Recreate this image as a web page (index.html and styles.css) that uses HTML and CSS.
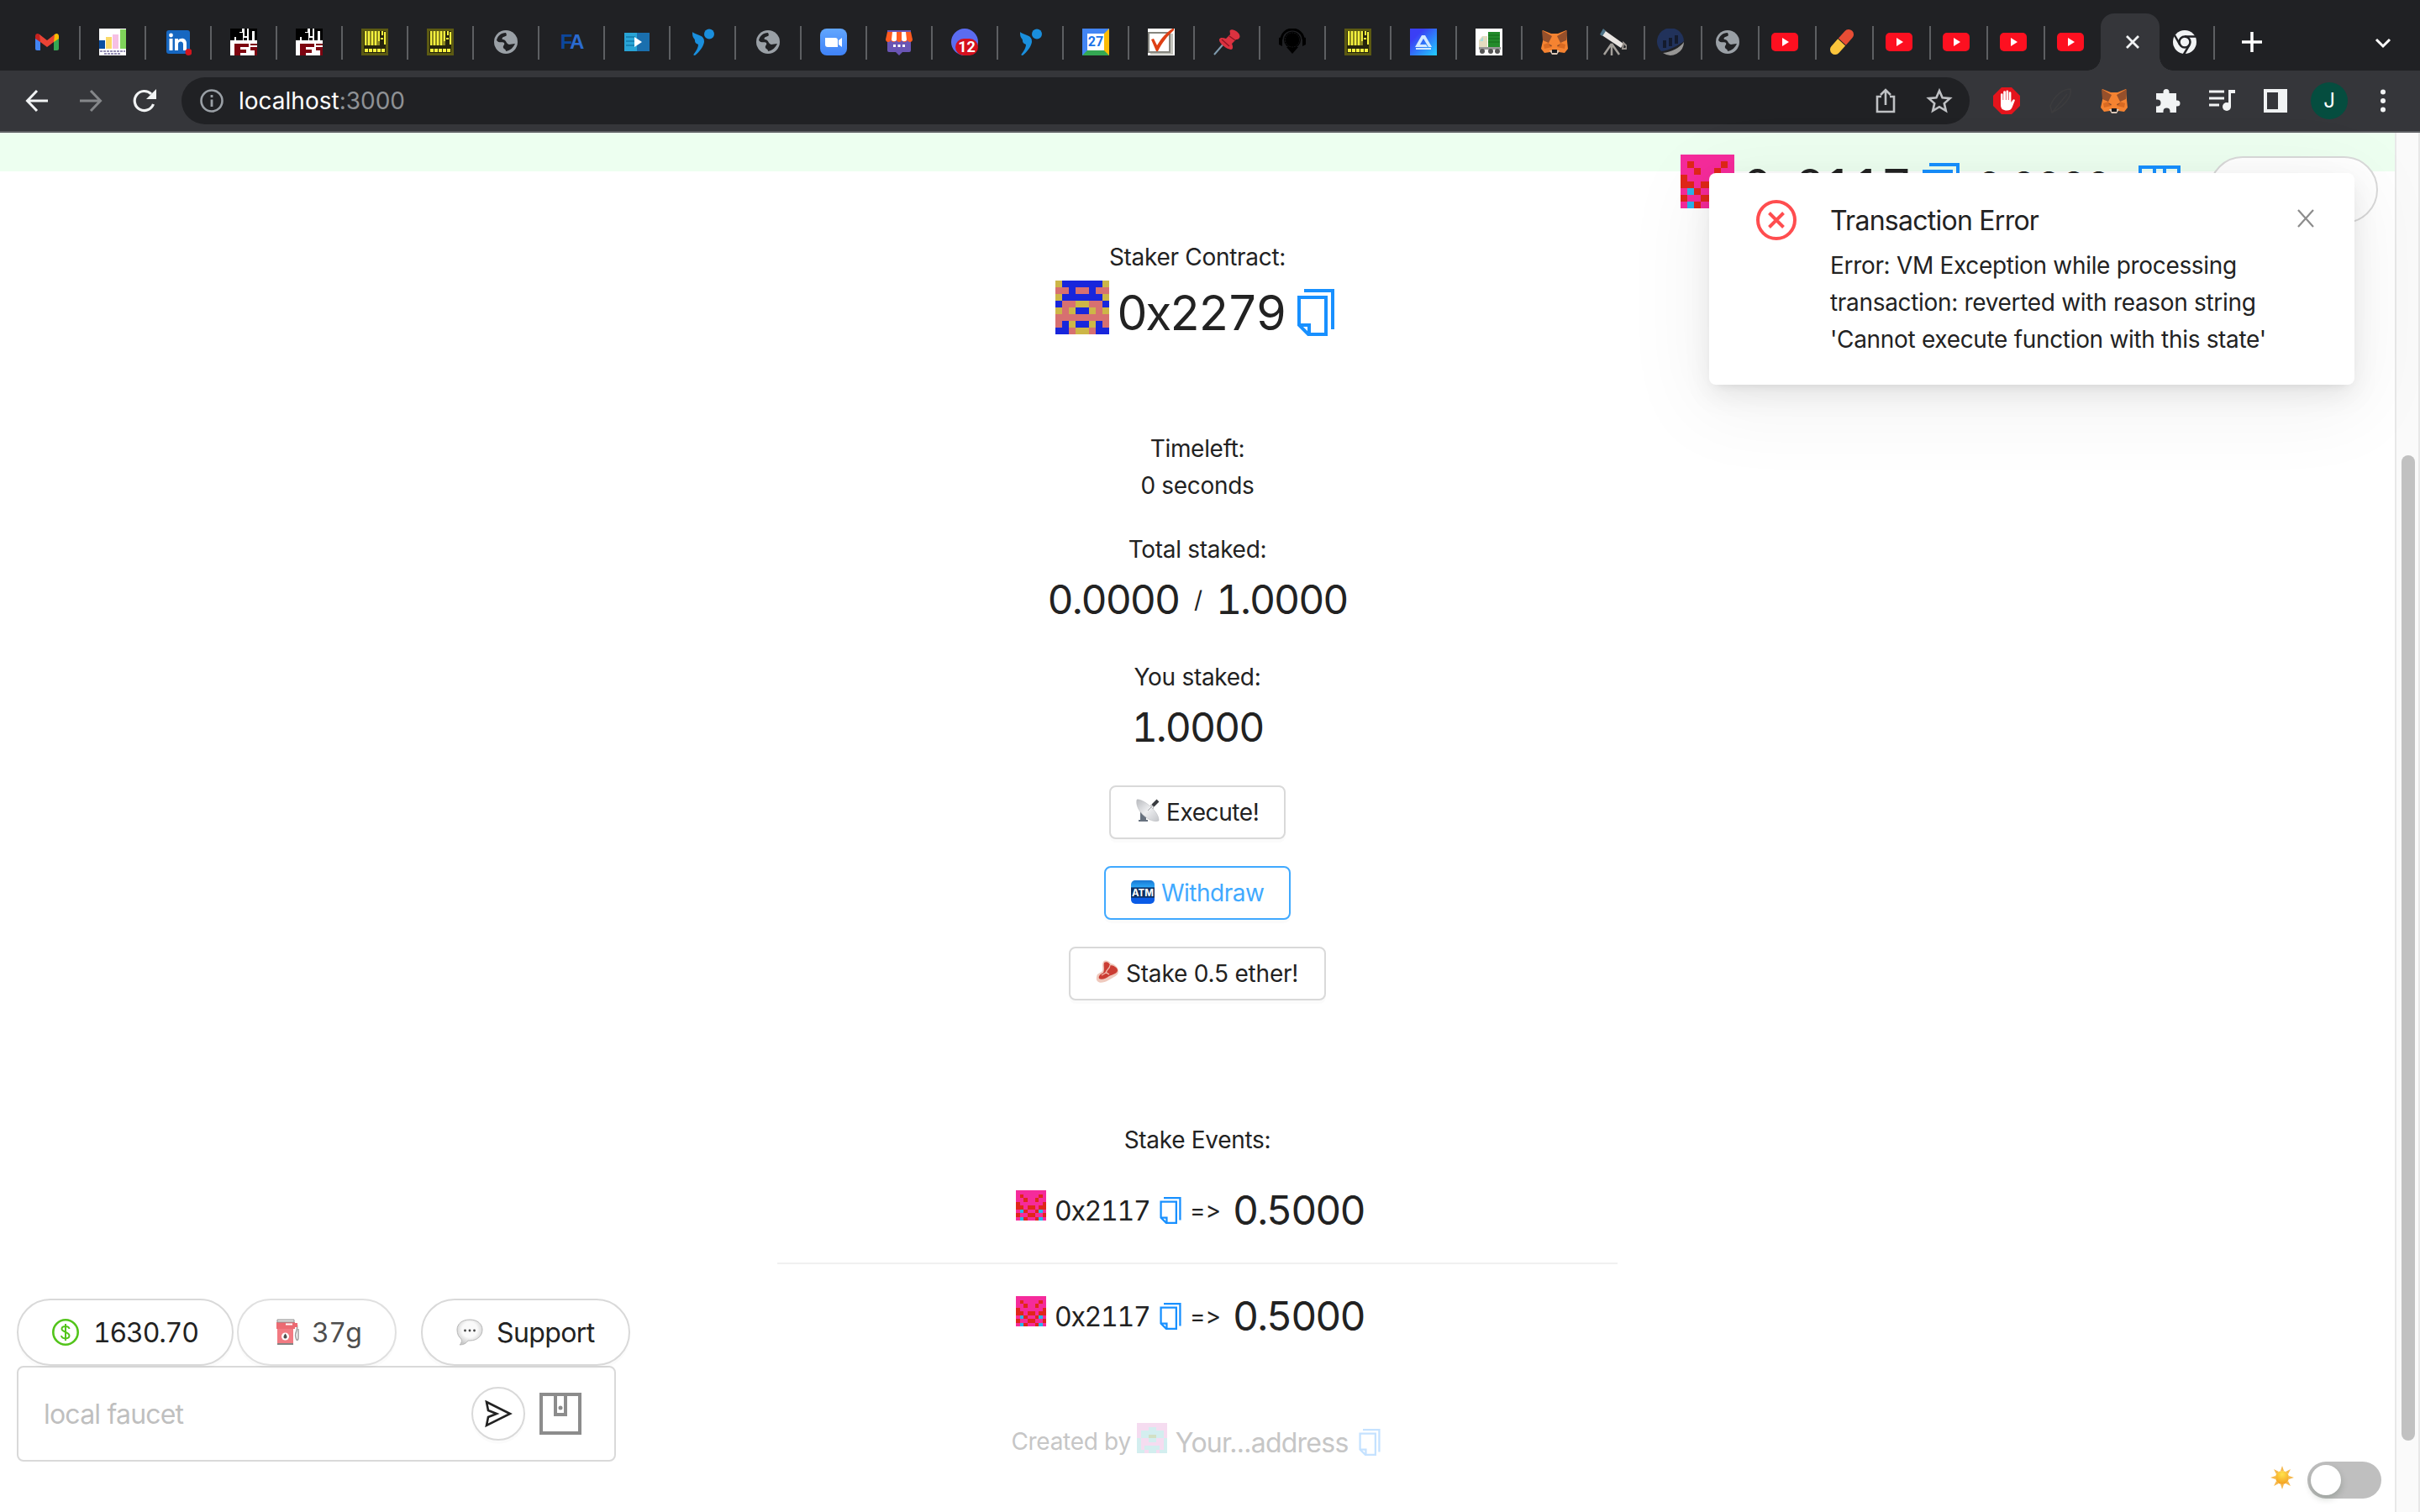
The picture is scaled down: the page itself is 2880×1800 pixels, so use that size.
FILE: index.html
```html
<!DOCTYPE html>
<html lang="en">
<head>
<meta charset="utf-8">
<title>localhost:3000</title>
<link rel="stylesheet" href="styles.css">
</head>
<body>
<svg class="defs" aria-hidden="true">
  <defs>
    <linearGradient id="gAlgo" x1="0" y1="0" x2="1" y2="1"><stop offset=".25" stop-color="#3a3ff5"/><stop offset="1" stop-color="#22d0ff"/></linearGradient>
    <linearGradient id="gZoom" x1="0" y1="0" x2="0" y2="1"><stop offset="0" stop-color="#61a6ff"/><stop offset="1" stop-color="#3f82f7"/></linearGradient>
    <linearGradient id="gDish" x1="0" y1="0" x2="1" y2="1"><stop offset="0" stop-color="#b9bbbf"/><stop offset=".5" stop-color="#eeeff1"/><stop offset="1" stop-color="#c4c6ca"/></linearGradient>
    <radialGradient id="gSun" cx=".5" cy=".25" r=".8"><stop offset="0" stop-color="#ffe34c"/><stop offset="1" stop-color="#f39a1c"/></radialGradient>
    <radialGradient id="gTalk" cx=".5" cy=".4" r=".6"><stop offset=".5" stop-color="#fafafa"/><stop offset="1" stop-color="#c8c8c8"/></radialGradient>
  </defs>
  <symbol id="gmail" viewBox="0 0 32 32"><path fill="#4285f4" d="M2 9v15a2 2 0 0 0 2 2h4V13z"/><path fill="#34a853" d="M30 9v15a2 2 0 0 1-2 2h-4V13z"/><path fill="#c5221f" d="M2 9c0-3 3-4 5-2l1 1v8l-6-4z"/><path fill="#fbbc04" d="M30 9c0-3-3-4-5-2l-1 1v8l6-4z"/><path fill="#ea4335" d="M7 7l9 7 9-7-1 9-8 6-8-6z"/></symbol>
  <symbol id="chart" viewBox="0 0 32 32"><path fill="#fff" d="M0 0h32v32H0z"/><path fill="#0b4ea2" d="M0 14h7v10H0z"/><path fill="#fbd968" d="M8 10h7v14H8z"/><path fill="#f6bfe4" d="M16 7h7v17h-7z"/><path fill="#7fd35a" d="M25 1h7v23h-7z"/><path stroke="#9690b5" stroke-width="2" stroke-dasharray="3 1" d="M1 27h30M6 30h20"/></symbol>
  <symbol id="linkedin" viewBox="0 0 32 32"><rect x="2" y="2" width="28" height="28" rx="3" fill="#1667c1"/><circle cx="7.5" cy="8" r="2.4" fill="#fff"/><path fill="#fff" d="M5.500 12h4v14h-4zM12 12h4v2c2-3.500 10-3.500 10 3.500V26h-4v-7.500c0-4-6-4-6 0V26h-4z"/><circle cx="28.500" cy="28" r="4" fill="#d2161e"/></symbol>
  <symbol id="hifi" viewBox="0 0 32 32"><path fill="#fff" d="M0 0h32v32H0z"/><path d="M0 0h14v4h-3v10H7v-4H5v4H0zM11 5h4v9h-4zM17 0h3v9h-3zM22 0h10v14h-3V3h-3v11h-4zM16 11h4v3h-4z"/><path fill="#7d0410" d="M5 18h17v4H12v3h7v4h-7v3H5zM24 18h8v2h-8zM24 22h8v10h-3v-6h-5z"/></symbol>
  <symbol id="barcode" viewBox="0 0 32 32"><path fill="#5c5a12" d="M0 0h32v32H0z"/><path fill="#26250d" d="M3 3h26v26H3z"/><path fill="#8a8620" d="M4 3h18v17H4z"/><path stroke="#f6f23e" stroke-width="2" d="M5 3v17M9 3v17M13 3v17M17 3v17M21 3v12"/><path stroke="#f6f23e" stroke-width="2" d="M25 3v5M28 4v15M23 12h3"/><path stroke="#f6f23e" stroke-width="4" stroke-dasharray="4 1" d="M4 26h25"/></symbol>
  <symbol id="globe" viewBox="0 0 32 32"><circle cx="16" cy="16" r="14" fill="#9aa0a6"/><path fill="#202124" d="M16 5c-6 0-10 4-11 9 3 4 7 1 9 3 1 3-2 3-1 6 1 2 3 1 3 4 6-1 9-5 11-9-3 0-5 1-7 1-4-1-3-5-7-6-2 0-2-2 0-3 3-1 5-1 3-5z"/></symbol>
  <symbol id="zoomapp" viewBox="0 0 32 32"><rect width="32" height="32" rx="8" fill="url(#gZoom)"/><path fill="#fff" d="M6 11h12a3 3 0 0 1 3 3v8H9a3 3 0 0 1-3-3zM22 14l4-3v11l-4-3z"/></symbol>
  <symbol id="video" viewBox="0 0 32 32"><path fill="#29a4d6" d="M1 5h15v22H1z"/><path fill="#1a6fae" d="M16 5h15v22H16z"/><path stroke="#1784b5" stroke-width="2" d="M3 10h11M3 15h11M3 20h11"/><path fill="#fff" d="M13 10l9 6-9 6z"/></symbol>
  <symbol id="bird" viewBox="0 0 32 32"><circle cx="24" cy="6.500" r="6" fill="#1a8fdd"/><path fill="#1a8fdd" d="M4 4c4 4 15 3 14 12-1 6-6 12-11 16-2 0-2-1-1-2 3-4 5-8 5-11-2-1-4-2-4-4 0-1 0-2-1-3-2-2-2-5-2-8z"/></symbol>
  <symbol id="shop" viewBox="0 0 32 32"><path fill="#6a55b5" d="M2 2h28v24a2 2 0 0 1-2 2h-8l-4 4-4-4H4a2 2 0 0 1-2-2z"/><path fill="#ff5a1f" d="M2 4h28l2 9c0 4-6 4-6 0 0 4-7 4-7 0 0 4-6 4-6 0 0 4-7 4-7 0 0 4-6 4-6 0z"/><path fill="#fff" d="M8 4h5v9c0 3-6 3-6 0zM19 4h5l1 9c0 3-6 3-6 0z"/><path fill="#fff" d="M9 19h3v3H9zM14.500 19h3v3h-3zM20 19h3v3h-3z"/></symbol>
  <symbol id="tick" viewBox="0 0 32 32"><path fill="#fff" d="M0 0h32v32H0z"/><path fill="none" stroke="#85857e" stroke-width="2" d="M1 5h25v23H1z"/><path fill="#c3c3bc" d="M27 6h3v25H3v-2h24z"/><path fill="#de4015" d="M4 13l3-1 4 8C17 10 23 4 31-1v3C23 9 17 17 12 27h-2z"/></symbol>
  <symbol id="pushpin" viewBox="0 0 32 32"><path stroke="#7f9bae" stroke-width="2" d="M1 31l13-15"/><path fill="#dc3240" d="M20 2c3-3 14 4 11 9-1 2-3 2-4 2l-5 5c2 4 1 7-1 7-5 0-15-8-14-12 1-3 5-2 8-1l5-5c0-2-1-4 0-5z"/><path stroke="#8f1623" stroke-width="1.500" d="M19 9l7 5M10 13l9 8"/></symbol>
  <symbol id="headset" viewBox="0 0 32 32"><path fill="none" stroke="#000" stroke-width="3" d="M3 13a13 12 0 0 1 26 0"/><path d="M0 11l4-1v11l-4-2zM32 11l-4-1v11l4-2z"/><circle cx="16" cy="13.500" r="10"/><path d="M9 22h14l-7 8z"/><circle cx="16" cy="13.500" r="8.500" fill="none" stroke="#17181a" stroke-dasharray="2 1"/></symbol>
  <symbol id="algo" viewBox="0 0 32 32"><path fill="url(#gAlgo)" d="M0 0h32v32H0z"/><path fill="#d3e9ff" d="M14 8h4l8 14h-4l-6-10-4 7h7l2 3H6z"/><path fill="#d3e9ff" d="M7 23h18v2H7z"/></symbol>
  <symbol id="truck" viewBox="0 0 32 32"><path fill="#fff" d="M0 0h32v32H0z"/><path fill="#238b2b" d="M15 4h14v18H15z"/><path stroke="#176a1d" stroke-width="1" d="M15 8h14M15 12h14M15 16h14"/><path fill="#e3dcc0" d="M4 14l4-5h6v14H4z"/><path fill="#a3dce0" d="M5 15l4-5v5z"/><path fill="#999" d="M4 22h26v3H4z"/><g fill="#555"><circle cx="8" cy="27" r="3"/><circle cx="18" cy="27" r="3"/><circle cx="26" cy="27" r="3"/></g></symbol>
  <symbol id="fox" viewBox="0 0 32 32"><path fill="#f58331" d="M2 2l10 4h8l10-4 1 13 1 9-4 5-7-1-5 3-5-3-7 1-4-5 2-9z"/><path fill="#96502b" d="M1 2l12 7-4 8-7-3zM31 2l-12 7 4 8 7-3z"/><path fill="#d96a22" d="M3 19l6-2 4 5-9 2zM29 19l-6-2-4 5 9 2z"/><path fill="#5f3a2b" d="M9 19l4 1-1 1zM23 19l-4 1 1 1z"/><path fill="#d8c5b5" d="M10 26h12l-3 5h-6z"/><path fill="#17191d" d="M13 25h6v4h-6z"/></symbol>
  <symbol id="scope" viewBox="0 0 32 32"><path fill="#e9e5e2" d="M4 1l24 17-3 5L1 7z"/><path fill="#4c7286" d="M4 0l3 3-4 6-3-2z"/><path stroke="#9a948e" stroke-width="2" d="M28 17l4 4-1 3-4 0z" fill="none"/><path stroke="#a39f9a" stroke-width="2.500" d="M14 18L5 31M14 18v14M14 18l9 13"/></symbol>
  <symbol id="ether" viewBox="0 0 32 32"><path fill="#21325b" d="M5 27a16 16 0 1 1 27-12C26 20 14 26 5 27z"/><path fill="#979695" d="M32 16a16 16 0 0 1-25 13c10-1 20-6 25-13z"/><path stroke="#141b2d" stroke-width="4" d="M9 14v9M16 11v10M23 8v10"/></symbol>
  <symbol id="yt" viewBox="0 0 32 32"><rect y="5" width="32" height="22" rx="5" fill="#fd1020"/><path fill="#fff" d="M13 11l8 5-8 5z"/></symbol>
  <symbol id="capsule" viewBox="0 0 32 32"><g transform="rotate(42 16 16)"><path fill="#e84d35" d="M10 15.500V4a6 6 0 0 1 12 0v11.500z"/><path fill="#fbc53c" d="M10 16.500V28a6 6 0 0 0 12 0V16.500z"/></g></symbol>
  <symbol id="chromelogo" viewBox="0 0 32 32"><circle cx="16" cy="16" r="14" fill="#f1f3f4"/><circle cx="16" cy="16" r="6.500" fill="none" stroke="#202124" stroke-width="2.500"/><path fill="none" stroke="#202124" stroke-width="2.500" d="M16 9.500h13M10.400 19.300L4 8M21.600 19.300L15 30.500"/></symbol>
  <symbol id="copy" viewBox="0 0 44 56"><g fill="none" stroke="currentColor" stroke-width="4"><path d="M8 2h34v46M2 10h32v44H13L2 43z"/><path d="M2 43h12v11"/></g></symbol>
  <symbol id="wallet" viewBox="0 0 50 50"><g fill="none" stroke="currentColor" stroke-width="4"><path d="M2 2h46v46H2zM19 2v24h12V2"/></g><circle cx="25" cy="18" r="2.500" fill="currentColor"/></symbol>
  <symbol id="face" viewBox="0 0 8 8" shape-rendering="crispEdges"><path fill="#f52b9b" d="M0 0h8v8H0z"/><path fill="#e02719" d="M1 1h1v1H1zM6 1h1v1H6zM2 2h1v1H2zM5 2h1v1H5zM0 3h1v1H0zM7 3h1v1H7zM0 4h2v1H0zM3 4h2v1H3zM6 4h2v1H6zM2 5h1v1H2zM5 5h1v1H5zM0 6h1v1H0zM3 6h2v1H3zM7 6h1v1H7zM2 7h1v1H2zM5 7h1v1H5z"/><path fill="#2bb4ea" d="M1 5h1v1H1zM6 5h1v1H6zM1 7h1v1H1zM6 7h1v1H6z"/></symbol>
</svg>

<header class="browser">
  <nav class="tabs">
    <span class="tab"><svg><use href="#gmail"/></svg></span>
    <span class="tab"><svg><use href="#chart"/></svg></span>
    <span class="tab"><svg><use href="#linkedin"/></svg></span>
    <span class="tab"><svg><use href="#hifi"/></svg></span>
    <span class="tab"><svg><use href="#hifi"/></svg></span>
    <span class="tab"><svg><use href="#barcode"/></svg></span>
    <span class="tab"><svg><use href="#barcode"/></svg></span>
    <span class="tab"><svg><use href="#globe"/></svg></span>
    <span class="tab"><b class="fa">F<i>A</i></b></span>
    <span class="tab"><svg><use href="#video"/></svg></span>
    <span class="tab"><svg><use href="#bird"/></svg></span>
    <span class="tab"><svg><use href="#globe"/></svg></span>
    <span class="tab"><svg><use href="#zoomapp"/></svg></span>
    <span class="tab"><svg><use href="#shop"/></svg></span>
    <span class="tab"><span class="chat"><b>12</b></span></span>
    <span class="tab"><svg><use href="#bird"/></svg></span>
    <span class="tab"><span class="calendar">27</span></span>
    <span class="tab"><svg><use href="#tick"/></svg></span>
    <span class="tab"><svg><use href="#pushpin"/></svg></span>
    <span class="tab"><svg><use href="#headset"/></svg></span>
    <span class="tab"><svg><use href="#barcode"/></svg></span>
    <span class="tab"><svg><use href="#algo"/></svg></span>
    <span class="tab"><svg><use href="#truck"/></svg></span>
    <span class="tab"><svg><use href="#fox"/></svg></span>
    <span class="tab narrow"><svg><use href="#scope"/></svg></span>
    <span class="tab narrow"><svg><use href="#ether"/></svg></span>
    <span class="tab narrow"><svg><use href="#globe"/></svg></span>
    <span class="tab narrow"><svg><use href="#yt"/></svg></span>
    <span class="tab narrow"><svg><use href="#capsule"/></svg></span>
    <span class="tab narrow"><svg><use href="#yt"/></svg></span>
    <span class="tab narrow"><svg><use href="#yt"/></svg></span>
    <span class="tab narrow"><svg><use href="#yt"/></svg></span>
    <span class="tab narrow last"><svg><use href="#yt"/></svg></span>
    <span class="tab-active"><svg viewBox="0 0 18 18"><path d="M2 2l14 14M16 2L2 16" stroke="#f1f3f4" stroke-width="2.800"/></svg></span>
    <span class="tab after"><svg><use href="#chromelogo"/></svg></span>
    <svg class="plus" viewBox="0 0 24 24"><path d="M12 0v24M0 12h24" stroke="#fff" stroke-width="3.500"/></svg>
    <svg class="chevron" viewBox="0 0 20 12"><path d="M2 2l8 8 8-8" fill="none" stroke="#fff" stroke-width="3"/></svg>
  </nav>
  <div class="toolbar">
    <svg class="nav-icon" viewBox="0 0 28 28"><path d="M27 14H3M14 2L2.500 14 14 26" fill="none" stroke="#f1f3f4" stroke-width="3"/></svg>
    <svg class="nav-icon" viewBox="0 0 28 28"><path d="M1 14h24M14 2l11.500 12L14 26" fill="none" stroke="#85878a" stroke-width="3"/></svg>
    <svg class="nav-icon" viewBox="0 0 28 28"><path d="M24.500 18A11.500 11.500 0 1 1 22 6" fill="none" stroke="#f1f3f4" stroke-width="3.200"/><path fill="#f1f3f4" d="M28 0v12H16z"/></svg>
    <div class="address">
      <svg class="info" viewBox="0 0 28 28"><circle cx="14" cy="14" r="12.500" fill="none" stroke="#9aa0a6" stroke-width="2.600"/><path d="M14 12.500V21M14 7v3" stroke="#9aa0a6" stroke-width="2.800"/></svg>
      <span class="url">localhost<i>:3000</i></span>
      <svg class="share" viewBox="0 0 28 30"><path d="M9 10H4v18h20V10h-5M14 20V3M8 8l6-6 6 6" fill="none" stroke="#bfc1c4" stroke-width="2.600"/></svg>
      <svg class="star" viewBox="0 0 30 30"><path d="M15 3l3.600 8.300 9 .8-6.800 6 2 8.800L15 22.200 7.200 26.900l2-8.800-6.800-6 9-.8z" fill="none" stroke="#bfc1c4" stroke-width="2.600"/></svg>
    </div>
    <div class="extensions">
      <svg viewBox="0 0 32 32"><path fill="#e4141c" d="M10 0h12l10 10v12L22 32H10L0 22V10z"/><path fill="#fff" d="M9 17V8.500a1.300 1.300 0 0 1 2.600 0V15h.6V5.500a1.300 1.300 0 0 1 2.700 0V15h.6V4.800a1.300 1.300 0 0 1 2.700 0V15h.6V6.500a1.300 1.300 0 0 1 2.600 0V18l2-3c1-1.500 3-.5 2.300 1l-3.200 8c-1 2.500-3 3.500-6 3.500-5 0-7.500-2-7.500-7z"/></svg>
      <svg viewBox="0 0 32 32"><path fill="none" stroke="#3c3c3e" stroke-width="1.600" d="M4 22C10 8 20 2 28 2c2 8-6 20-22 28zM6 30L24 8"/></svg>
      <svg viewBox="0 0 32 32"><use href="#fox"/></svg>
      <svg viewBox="0 0 32 32"><path fill="#f1f3f4" d="M2 7h8.500V5.500a3.500 3.500 0 0 1 7 0V7H26v8.500h1a3.500 3.500 0 0 1 0 7h-1V30h-7.500v-1.500a4 4 0 0 0-8 0V30H2v-7.500h1.500a4 4 0 0 0 0-8H2z"/></svg>
      <svg viewBox="0 0 32 32"><path d="M1 5h18M1 13h18M1 21h12" stroke="#f1f3f4" stroke-width="3"/><circle cx="22" cy="23" r="5" fill="#f1f3f4"/><path fill="#f1f3f4" d="M24 3h8v4h-5v16h-3z"/></svg>
      <svg viewBox="0 0 32 32"><path fill="#f1f3f4" fill-rule="evenodd" d="M2 2h28v28H2zM6 6h13v20H6z"/></svg>
      <span class="avatar">J</span>
      <svg class="dots" viewBox="0 0 6 28"><g fill="#f1f3f4"><circle cx="3" cy="3.500" r="3"/><circle cx="3" cy="14" r="3"/><circle cx="3" cy="24.500" r="3"/></g></svg>
    </div>
  </div>
</header>

<div class="viewport">
  <div class="page">
    <div class="band"></div>
    <main class="staker">
      <div class="label">Staker Contract:</div>
      <div class="contract">
        <svg class="blockie-l" viewBox="0 0 8 8" shape-rendering="crispEdges"><path fill="#1826dc" d="M0 0h8v8H0z"/><path fill="#cdb647" d="M0 0h1v1H0zM7 0h1v1H7zM0 2h1v1H0zM7 2h1v1H7zM3 3h2v1H3zM0 4h1v1H0zM2 4h1v1H2zM5 4h1v1H5zM7 4h1v1H7zM2 6h1v1H2zM5 6h1v1H5zM3 7h2v1H3z"/><path fill="#d77070" d="M0 1h2v1H0zM3 1h2v1H3zM6 1h2v1H6zM1 3h2v1H1zM5 3h2v1H5zM1 4h1v1H1zM6 4h1v1H6zM0 5h8v1H0zM0 6h1v1H0zM7 6h1v1H7zM2 7h1v1H2zM5 7h1v1H5z"/></svg>
        <span class="addr-l">0x2279</span>
        <svg class="copy-l"><use href="#copy"/></svg>
      </div>
      <div class="label timeleft">Timeleft:</div>
      <div class="label">0 seconds</div>
      <div class="label gap">Total staked:</div>
      <div class="amounts"><span class="amount">0.0000</span><span class="slash">/</span><span class="amount">1.0000</span></div>
      <div class="label gap">You staked:</div>
      <div class="amounts"><span class="amount">1.0000</span></div>
      <div class="actions">
        <button class="btn execute"><svg viewBox="0 0 28 28"><path fill="#68727f" d="M5 14l7 5v6h2v2H3v-2h2z"/><path fill="url(#gDish)" stroke="#b5b7bb" stroke-width=".5" d="M1 1C7-1 28 15 27 26 17 30-2 14 1 1z"/><path d="M14 14l7-7M17 8l4-1M20 12l1-5" stroke="#a3a5a9" stroke-width="1"/><path d="M20 8l6-6" stroke="#3a3c40" stroke-width="4"/></svg>Execute!</button>
        <button class="btn withdraw"><span class="atm">ATM</span>Withdraw</button>
        <button class="btn stake"><svg viewBox="0 0 28 28"><path fill="#efc9bd" d="M9 2c2-3 7-1 9 2 3 0 9 4 9 9 0 6-6 7-12 11-5 3-11 4-13 1-2-2-1-6 0-8l6-4c1-4-1-8 1-11z"/><path fill="#cb3d33" d="M10 3c3-2 6 0 7 3 4 0 9 3 9 6 0 4-6 5-10 7-4 3-9 5-12 3-1-3 1-5 5-7 2-4 0-8 1-12z"/><path d="M17 6c0 4-4 5-5 9l-5 3M12 15c2 0 2 1 4 2" fill="none" stroke="#efb8aa" stroke-width="1.300"/></svg>Stake 0.5 ether!</button>
      </div>
      <section class="events">
        <div class="label">Stake Events:</div>
        <div class="event"><svg class="blockie-s"><use href="#face"/></svg><span class="addr-s">0x2117</span><svg class="copy-s"><use href="#copy"/></svg><span class="arrow">=&gt;</span><span class="amount">0.5000</span></div>
        <div class="event"><svg class="blockie-s"><use href="#face"/></svg><span class="addr-s">0x2117</span><svg class="copy-s"><use href="#copy"/></svg><span class="arrow">=&gt;</span><span class="amount">0.5000</span></div>
      </section>
      <footer class="credit">
        <span class="by">Created by</span>
        <svg class="blockie-s" viewBox="0 0 8 8" shape-rendering="crispEdges"><path fill="#f5dcf0" d="M0 0h8v8H0z"/><path fill="#d3eeef" d="M3 1h2v1H3zM1 2h6v2H1zM0 4h1v4H0zM7 4h1v4H7zM3 4h2v1H3zM2 6h4v1H2zM1 7h1v1H1zM3 7h2v1H3zM6 7h1v1H6z"/><path fill="#d2e0c4" d="M3 3h2v1H3z"/></svg>
        <span class="author">Your...address</span>
        <svg class="copy-s"><use href="#copy"/></svg>
      </footer>
    </main>
  </div>
  <div class="scrollbar"><div class="thumb"></div></div>

  <div class="account">
    <svg class="blockie-l"><use href="#face"/></svg>
    <span class="addr-l">0x2117</span>
    <svg class="copy-l"><use href="#copy"/></svg>
    <span class="amount">0.0000</span>
    <svg class="wallet"><use href="#wallet"/></svg>
    <span class="logout"></span>
  </div>

  <aside class="toast">
    <svg class="toast-icon" viewBox="0 0 48 48"><circle cx="24" cy="24" r="22" fill="none" stroke="#ff4d4f" stroke-width="4"/><path d="M15.500 15.500l17 17M32.500 15.500l-17 17" stroke="#ff4d4f" stroke-width="4"/></svg>
    <div class="toast-text">
      <div class="toast-title">Transaction Error</div>
      <div class="toast-body">Error: VM Exception while processing<br>transaction: reverted with reason string<br>'Cannot execute function with this state'</div>
    </div>
    <svg class="toast-close" viewBox="0 0 20 20"><path d="M1 0l18 20M19 0L1 20" stroke="#8c8c8c" stroke-width="2.200"/></svg>
  </aside>

  <div class="dock">
    <div class="pills">
      <span class="pill price"><svg viewBox="0 0 32 32"><circle cx="16" cy="16" r="14.700" fill="none" stroke="#52c41a" stroke-width="2.600"/><path d="M20.500 12c-.5-4-9-4-9 0s9 3.500 9 8-9 4.500-9.500 0M16 6v20" fill="none" stroke="#52c41a" stroke-width="2"/></svg><span class="pill-text">1630.70</span></span>
      <span class="pill gas"><svg viewBox="0 0 28 32"><path fill="#ef5a63" d="M2 12h19v17H2z"/><path fill="#e8454f" d="M1 4h22v8H1z"/><path fill="#d8d8d8" stroke="#777" d="M2 1h20v3H2z"/><path fill="#fff" d="M12 5.500h8v2h-8z"/><path fill="#666" d="M2 29h19v2H2z"/><circle cx="11.500" cy="21" r="4.500" fill="#fff"/><path fill="#222" d="M11.500 17.500c4 5 1 6 0 6s-4-1 0-6z"/><path fill="none" stroke="#888" stroke-width="1.500" d="M25 6c3 6-3 10-1 16 1 5 3 4 3 0V12"/><path fill="#e8454f" d="M23 5h3v5h-3z"/></svg><span class="pill-text">37g</span></span>
      <span class="pill support"><svg viewBox="0 0 32 32"><path fill="url(#gTalk)" stroke="#b8b8b8" d="M16 1c9 0 15 5 15 12s-6 13-15 13h-2c-2 3-5 5-10 5 2-2 3-4 2-7-3-2-5-6-5-11C1 6 7 1 16 1z"/><g fill="#444"><circle cx="10.500" cy="14" r="1.400"/><circle cx="16" cy="14" r="1.400"/><circle cx="21.500" cy="14" r="1.400"/></g></svg><span class="pill-text">Support</span></span>
    </div>
    <div class="faucet">
      <span class="placeholder">local faucet</span>
      <span class="send"><svg viewBox="0 0 32 32"><path d="M2 2l28 14L2 30l2-10 10-4L4 12z" fill="none" stroke="#222" stroke-width="2.600"/></svg></span>
      <svg class="wallet"><use href="#wallet"/></svg>
    </div>
  </div>

  <div class="theme">
    <svg viewBox="0 0 28 28"><path fill="#f5b94f" d="M14 0l2 6h-4zM14 28l2-6h-4zM0 14l6-2v4zM28 14l-6-2v4zM4 4l6 3-3 3zM24 4l-6 3 3 3zM4 24l6-3-3-3zM24 24l-6-3 3-3z"/><circle cx="14" cy="14" r="8" fill="url(#gSun)"/></svg>
    <span class="switch"><span class="knob"></span></span>
  </div>
</div>
</body>
</html>
```
FILE: styles.css
```css
* { box-sizing: border-box; }
body {
  margin: 0;
  width: 2880px;
  height: 1800px;
  overflow: hidden;
  background: #fff;
  color: #222;
  font: 28px/44px Inter, "Liberation Sans", sans-serif;
  font-feature-settings: "calt" 0;
}
svg { display: block; flex: none; overflow: visible; }
i { font-style: normal; }
.defs { position: absolute; width: 0; height: 0; }

/* browser chrome */
.browser { height: 158px; background: #35363a; border-bottom: 2px solid #5f6064; }
.tabs { display: flex; height: 84px; padding-left: 18px; background: #202124; }
.tab {
  display: flex; align-items: center; justify-content: center;
  width: 78px; height: 40px; margin-top: 31px; padding-bottom: 2px;
  border-right: 2px solid #5d5f62;
}
.tab > svg { width: 32px; height: 32px; }
.tab.narrow { width: 68px; padding-right: 6px; }
.tab.last { width: 66px; padding-right: 6px; border-right: 0; }
.tab-active {
  position: relative;
  display: flex; align-items: center; justify-content: center;
  width: 70px; height: 68px; margin-top: 16px; padding-left: 6px;
  background: #35363a; border-radius: 16px 16px 0 0;
}
.tab-active::before, .tab-active::after {
  content: ""; position: absolute; bottom: 0; width: 16px; height: 16px;
}
.tab-active::before { right: 100%; background: radial-gradient(circle at 0 0, transparent 15.500px, #35363a 16px); }
.tab-active::after { left: 100%; background: radial-gradient(circle at 100% 0, transparent 15.500px, #35363a 16px); }
.tab-active svg { width: 18px; height: 18px; }
.tab.after { width: 66px; padding-right: 4px; }
.plus { width: 24px; height: 24px; margin: 38px 0 0 32px; }
.chevron { width: 20px; height: 12px; margin: 45px 34px 0 auto; }
.fa { font: 800 24px/30px "Liberation Sans", sans-serif; color: #0c479c; letter-spacing: -2px; }
.fa i { color: #2b6bd0; }
.chat { display: flex; justify-content: flex-end; align-items: flex-end; width: 32px; height: 32px; border-radius: 50%; background: #5b6cf0; }
.chat b { width: 27px; height: 20px; border-radius: 10px; background: #d5101e; color: #fff; font: 700 18px/20px Roboto, sans-serif; text-align: center; }
.calendar {
  width: 32px; height: 32px; background: #fff; color: #1a73e8; text-align: center;
  border: 6px solid; border-color: #4285f4 #fbbc04 #34a853 #4285f4;
  font: 700 16px/20px Roboto, sans-serif;
}
.toolbar { display: flex; align-items: center; height: 72px; padding-left: 30px; }
.nav-icon { width: 28px; height: 28px; margin-right: 36px; }
.nav-icon:nth-of-type(3) { margin-right: 30px; }
.address { display: flex; align-items: center; width: 2128px; height: 56px; padding: 0 21px 0 22px; border-radius: 28px; background: #202124; }
.info { width: 28px; height: 28px; }
.url { margin: 0 auto 0 18px; color: #fff; }
.url i { color: #8e9195; }
.share { width: 28px; height: 30px; margin-right: 35px; }
.star { width: 30px; height: 30px; }
.extensions { display: flex; align-items: center; margin-left: 28px; }
.extensions svg { width: 32px; height: 32px; margin-right: 32px; }
.avatar { width: 44px; height: 44px; margin: 0 39px 0 -6px; border-radius: 50%; background: #054d3f; color: #fff; font-size: 24px; text-align: center; }
.extensions .dots { width: 6px; height: 28px; margin: 0; }

/* page */
.viewport { position: relative; display: flex; height: 1642px; letter-spacing: -.3px; }
.page { width: 2850px; }
.band { height: 46px; background: #edfff0; }
.scrollbar { width: 30px; padding: 384px 0 0 6px; background: #fafafa; border: solid #e8e8e8; border-width: 0 2px; }
.thumb { width: 16px; height: 1173px; border-radius: 8px; background: #c1c1c1; }

.staker { display: flex; flex-direction: column; align-items: center; padding-top: 80px; }
.label { height: 44px; text-align: center; white-space: nowrap; }
.contract { display: flex; height: 80px; padding-top: 6px; margin-right: 6px; }
.blockie-l { width: 64px; height: 64px; }
.blockie-s { width: 36px; height: 36px; }
.addr-l, .addr-s, .amount, .pill-text { font-variant-numeric: tabular-nums; }
.addr-l { width: 216px; padding-left: 9px; font-size: 57px; line-height: 78px; letter-spacing: -2.700px; }
.copy-l { width: 44px; height: 56px; margin: 10px 0 0 8px; color: #1890ff; }
.copy-s { width: 26px; height: 32px; color: #1890ff; }
.timeleft { margin-top: 104px; }
.gap { margin-top: 32px; }
.amounts { display: flex; align-items: center; height: 76px; }
.amount { font-size: 48px; line-height: 76px; letter-spacing: -2px; }
.slash { margin: 0 16px 0 18px; }
.actions { display: flex; flex-direction: column; align-items: center; gap: 32px; margin-top: 31px; }
.btn {
  display: flex; align-items: center; gap: 8px;
  height: 64px; padding: 0 0 0 30px;
  border: 2px solid #d9d9d9; border-radius: 8px; background: #fff; color: #222;
  box-shadow: 0 4px 0 rgba(0, 0, 0, .016);
  font: inherit; letter-spacing: inherit; white-space: nowrap;
}
.btn svg { width: 28px; height: 28px; margin-top: -4px; }
.execute { width: 210px; letter-spacing: -.400px; }
.withdraw { width: 222px; color: #40a9ff; border-color: #40a9ff; letter-spacing: -.500px; }
.stake { width: 306px; letter-spacing: -.200px; }
.atm { width: 28px; height: 28px; margin-top: -2px; border-radius: 5px; background: linear-gradient(#1976d2, #2aa5f6 28%, #0b2f63 32%, #0b2f63 72%, #0a5be6 76%); color: #fff; font: 700 11.500px/30px Inter, sans-serif; letter-spacing: 0; text-align: center; }
.events { width: 1000px; margin-top: 144px; }
.event { display: flex; align-items: center; height: 126px; padding-left: 284px; border-bottom: 2px solid #f0f0f0; }
.event:last-child { height: 124px; border: 0; }
.event .blockie-s { margin-top: -12px; }
.addr-s { width: 125px; margin-left: 10px; padding-top: 2px; font-size: 32px; letter-spacing: -1.300px; }
.event .arrow { width: 51px; margin-left: 10px; letter-spacing: 0; }
.event .copy-s { margin-top: -1px; }
.credit { display: flex; align-items: center; height: 44px; margin-top: 65px; margin-right: 4px; color: #c6c6c6; }
.by { margin-right: 7px; }
.credit .blockie-s { margin: -9px 10px 0 0; }
.author { padding-top: 3px; font-size: 32px; letter-spacing: -.750px; margin-right: 12px; }
.credit .copy-s { margin-top: 2px; color: #c5e2ff; }

/* overlays */
.account { position: absolute; left: 2000px; top: 26px; display: flex; }
.account .amount { margin-left: 20px; width: 195px; letter-spacing: -1.500px; }
.account .wallet { width: 50px; height: 50px; margin: 13px 34px 0 -2px; color: #1890ff; }
.logout { width: 201px; height: 80px; margin-top: 2px; border: 2px solid #d9d9d9; border-radius: 40px; background: #fff; }
.toast {
  position: absolute; left: 2034px; top: 48px; display: flex;
  width: 768px; height: 252px; padding: 32px 48px 0 56px;
  border-radius: 8px; background: #fff;
  box-shadow: 0 6px 12px -8px rgba(0,0,0,.12), 0 12px 32px rgba(0,0,0,.08), 0 18px 96px 16px rgba(0,0,0,.05);
}
.toast-icon { width: 48px; height: 48px; }
.toast-text { flex: 1; margin: 1px 0 0 40px; white-space: nowrap; }
.toast-title { font-size: 32px; line-height: 48px; height: 55px; letter-spacing: -.740px; }
.toast-body { letter-spacing: -.320px; }
.toast-close { width: 20px; height: 20px; margin-top: 12px; }
.dock { position: absolute; left: 20px; top: 1388px; font-size: 32px; }
.pills { display: flex; }
.pill { display: flex; align-items: center; height: 80px; padding-left: 40px; border: 2px solid #d9d9d9; border-radius: 40px; background: #fff; box-shadow: 0 4px 0 rgba(0,0,0,.015); }
.pill-text { padding-top: 2px; letter-spacing: -.600px; }
.price .pill-text { letter-spacing: -1.200px; }
.pill svg { width: 32px; height: 32px; margin-right: 17px; }
.price { width: 258px; }
.gas { width: 190px; margin-left: 4px; opacity: .8; padding-left: 44px; }
.gas svg { width: 28px; margin-right: 15px; }
.support { width: 249px; margin-left: 29px; }
.support svg { margin-right: 16px; }
.faucet { display: flex; align-items: center; width: 713px; height: 114px; padding: 0 39px 0 30px; border: 2px solid #d9d9d9; border-radius: 8px; background: #fff; }
.placeholder { flex: 1; padding-top: 2px; color: #bfbfbf; letter-spacing: -.800px; }
.send { display: flex; align-items: center; justify-content: center; width: 64px; height: 64px; margin-right: 17px; border: 2px solid #d9d9d9; border-radius: 50%; box-shadow: 0 4px 0 rgba(0,0,0,.016); }
.send svg { width: 32px; height: 32px; }
.faucet .wallet { width: 50px; height: 50px; color: #8c8c8c; }
.theme { position: absolute; left: 2702px; top: 1582px; display: flex; }
.theme svg { width: 28px; height: 28px; margin: 5px 16px 0 0; }
.switch { width: 88px; height: 44px; padding: 4px; border-radius: 22px; background: #bfbfbf; }
.knob { display: block; width: 36px; height: 36px; border-radius: 50%; background: #fff; box-shadow: 0 4px 8px rgba(0,35,11,.2); }
```
